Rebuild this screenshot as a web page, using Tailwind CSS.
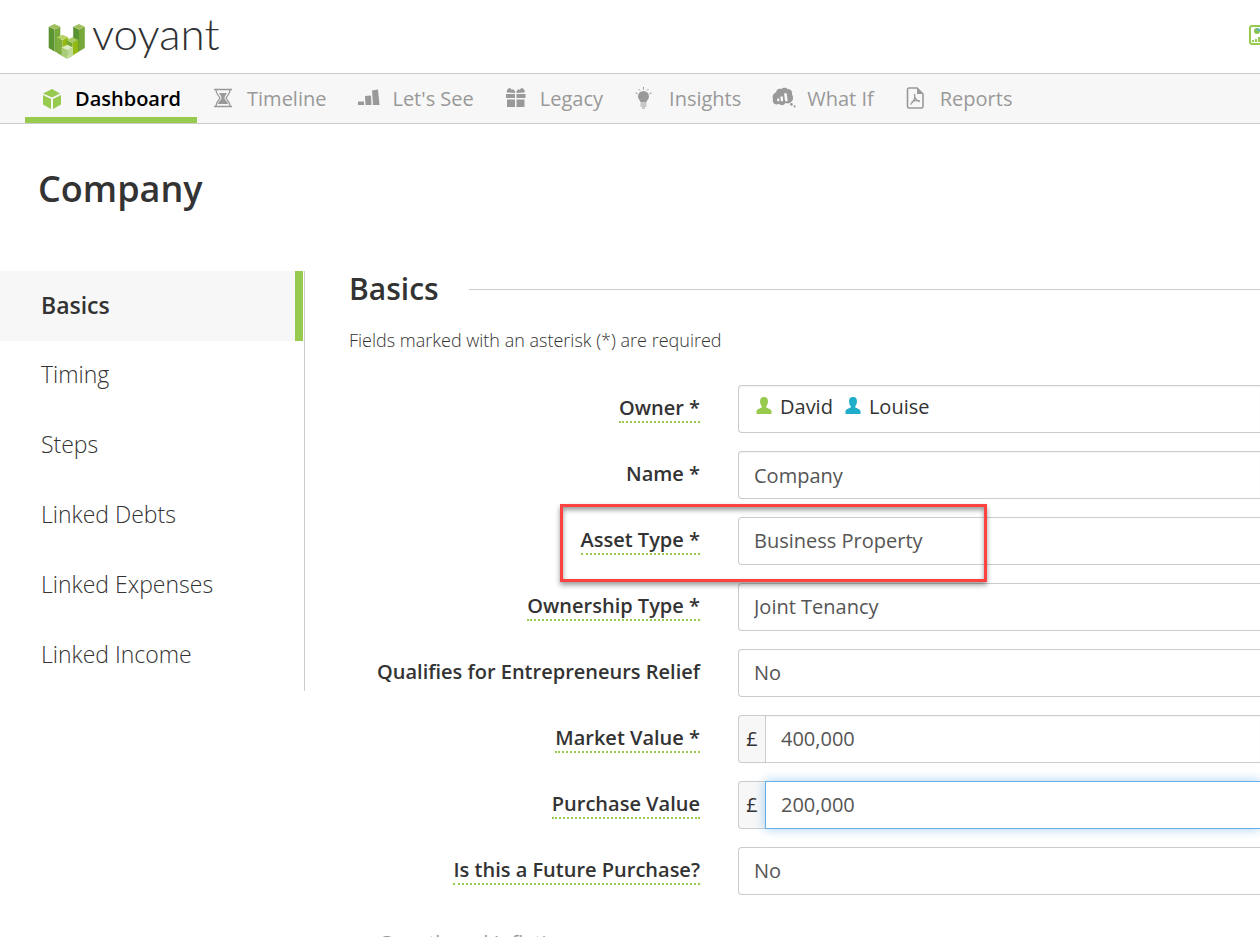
<!doctype html>
<html lang="en">

<head>
    <title>Voyant - Company</title>
    <meta charset="UTF-8">
    <meta name="viewport" content="width=device-width, initial-scale=1.0">
    <script src="https://cdn.jsdelivr.net/npm/@tailwindcss/browser@4"></script>
</head>

<body class="h-screen overflow-hidden bg-white font-['Open_Sans',sans-serif] text-xl text-[#333]">
    <header class="flex h-[74px] items-center justify-between overflow-hidden border-b border-[#ccc] pl-12">
        <a href="#" class="flex items-start gap-1.5 pb-2" aria-label="voyant">
            <svg class="mt-[18px] h-9 w-[38px]" viewBox="0 0 38 36" aria-hidden="true">
                <path fill="#5b9232" d="M.7 3.700l5.800 2.800v22L.7 25z" />
                <path fill="#76a83c" d="M6.500 6.500l5.800-2.800V30l-5.800-1.500z" />
                <path fill="#a0c060" d="M.7 3.700L6.500 1l5.800 2.700-5.800 2.800z" />
                <path fill="#5b9232" d="M25.200 3.700L31 6.500v22L25.200 30z" />
                <path fill="#76a83c" d="M31 6.500l5.800-2.800V25L31 28.500z" />
                <path fill="#a0c060" d="M25.200 3.700L31 1l5.800 2.700L31 6.500z" />
                <path fill="#7fae3f" d="M8.700 14.300l5.800 2.700v16l-5.800-3.300z" />
                <path fill="#93b80f" d="M14.500 17l5.800-2.700V33h-5.800z" />
                <path fill="#b9d268" d="M8.700 14.300l5.800-2.600 5.800 2.600-5.800 2.700z" />
                <path fill="#76a630" d="M18.700 17l5.800 3v12h-5.800z" />
                <path fill="#93b80f" d="M24.500 20l5.800-3v12l-5.800 3.400z" />
                <path fill="#a9ca63" d="M18.700 17l5.800-2.700 5.800 2.700-5.800 3z" />
                <path fill="#a9cc78" d="M13.600 24.500l5.700 2.800V36l-5.700-3.300z" />
                <path fill="#c0da98" d="M19.300 27.300l5.700-2.800v8.200L19.300 36z" />
                <path fill="#dcebc3" d="M13.600 24.500l5.700-2.800 5.700 2.800-5.700 2.800z" />
            </svg>
            <span class="font-['Lato',sans-serif] text-[44px] leading-[56px] font-light text-[#2f3133]">voyant</span>
        </a>
        <button type="button" class="-mr-2 shrink-0 pb-1" aria-label="Client overview">
            <svg class="h-5 w-5" viewBox="0 0 20 20" fill="none" aria-hidden="true">
                <rect x="2" y="1" width="20" height="18" rx="2" stroke="#97ca4f" stroke-width="2" />
                <circle cx="9" cy="6" r="3" fill="#8cc152" />
                <path fill="#5bb8c4" d="M9 6V3a3 3 0 0 1 3 3z" />
                <path fill="#97ca4f" d="M4 15h2v2H4zM7 14h2v3H7zM10 12h2v5h-2z" />
            </svg>
        </button>
    </header>

    <nav class="flex h-[50px] overflow-hidden border-b border-[#ccc] bg-[#f7f7f7] pl-[25px] text-[#999]">
        <a href="#" class="flex items-center gap-3.5 border-b-6 border-[#97ca4f] px-4 pt-[6px] text-black font-semibold">
            <svg class="h-5 w-5" viewBox="0 0 20 20" fill="#97ca4f" aria-hidden="true">
                <path d="M11 0l8 4.500-8 4-9-4zM2 6l8 4v10l-8-4.500zM20 6l-8 4v10l8-4.500z" />
            </svg>
            Dashboard
        </a>
        <a href="#" class="flex items-center gap-3.5 px-4">
            <svg class="mb-0.5 h-5 w-5" viewBox="0 0 20 20" fill="none" stroke="#999" aria-hidden="true">
                <path stroke-width="1.600" d="M1 1.500h18M1 18.500h18" />
                <path stroke-width="1.300" d="M3 2c0 4 3 6 4 8-1 2-4 4-4 8M17 2c0 4-3 6-4 8 1 2 4 4 4 8" />
                <path fill="#999" stroke="none" d="M6 5h8c-1 2-2.500 3-2.500 5s3 3 3.500 6H5c.5-3 3.500-4 3.500-6S7 7 6 5z" />
            </svg>
            Timeline
        </a>
        <a href="#" class="flex items-center gap-3.5 px-4">
            <svg class="-mr-0.5 mb-0.5 h-5 w-[22px]" viewBox="0 0 22 20" fill="#999" aria-hidden="true">
                <path d="M0 13.500h6V17H0zM7 8l6-.5.500 9.500H7.500zM14 2.500l6-1L21.500 17H15z" />
            </svg>
            Let's See
        </a>
        <a href="#" class="flex items-center gap-3.5 px-4">
            <svg class="mb-0.5 h-5 w-5" viewBox="0 0 20 20" fill="#999" aria-hidden="true">
                <path d="M0 6h9v4H0zM10.500 6h9v4h-9zM1 11.500h8V19H1zM10.500 11.500h8V19h-8zM9 5L1 4.500C0 3 2 0 4 0l2 2 1-1 2 2zM10.500 5l8-.5c1-1.500-1-4.500-3-4.500l-2 2-1-1-2 2z" />
            </svg>
            Legacy
        </a>
        <a href="#" class="flex items-center gap-3.5 px-4">
            <svg class="mb-0.5 h-6 w-5" viewBox="0 0 20 24" fill="#999" aria-hidden="true">
                <path d="M8.500 5A5.500 5.500 0 0 1 14 10.500c0 3-2.500 3.500-2.500 6h-6c0-2.500-2.500-3-2.500-6A5.500 5.500 0 0 1 8.500 5z" />
                <path stroke="#999" fill="none" d="M5.500 18h6M5.500 20h6M7 22h3M8.500 1v2.500M.5 7l2 .5M16.500 7l-2 .5M3.500 3L5 4.500M13.500 3L12 4.500" />
            </svg>
            Insights
        </a>
        <a href="#" class="flex items-center gap-3.5 px-4">
            <svg class="mb-0.5 h-5 w-5 overflow-visible" viewBox="1 1 19 19" aria-hidden="true">
                <path fill="#999" d="M4 5c0-3 3-4 5-3 2-2 5-1 6 0 3 0 5 3 4 5 2 3 1 7-2 8-1 1-3 1-4 0-2 3-5 3-6 1-4 2-7-1-6-4-1-3 0-6 3-7z" />
                <path fill="#f7f7f7" d="M5 11h2v2.500H5zM8 9h2.500v4.500H8.500zM11.500 6h2.500l1 7.500h-2.500z" />
                <circle cx="18.500" cy="16.500" r="1.300" fill="#999" />
                <circle cx="21.500" cy="18.500" r="1" fill="#999" />
            </svg>
            What If
        </a>
        <a href="#" class="flex items-center gap-3.5 px-4">
            <svg class="mb-0.5 h-6 w-5" viewBox="0 0 20 24" fill="none" stroke="#999" stroke-width="1.600" aria-hidden="true">
                <path d="M11 2H3Q1.500 2 1.500 3.500v17Q1.500 22 3 22h12.500q1.500 0 1.500-1.500V8z" />
                <path fill="#999" stroke="none" d="M11 1.500v6.500H17.500z" />
                <path stroke-width="1.300" d="M8.500 8c1 4 0 7-4 10.500M5.500 16c3-2 5-2 8.500-1M9 11.500c.500 2 2 3 4.500 4.500" />
            </svg>
            Reports
        </a>
    </nav>

    <h1 class="px-[38px] pt-10 text-4xl leading-[50px] font-semibold">Company</h1>

    <div class="mt-[57px] flex items-start">
        <aside class="w-[305px] shrink-0 border-r border-[#ccc] text-[23px]">
            <a href="#" class="mr-px flex h-[70px] items-center border-r-8 border-[#97ca4f] bg-[#f7f7f7] pb-0.5 pl-[41px] font-semibold">Basics</a>
            <a href="#" class="flex h-[70px] items-center pb-1 pl-[41px] font-light">Timing</a>
            <a href="#" class="flex h-[70px] items-center pb-1 pl-[41px] font-light">Steps</a>
            <a href="#" class="flex h-[70px] items-center pb-1 pl-[41px] font-light">Linked Debts</a>
            <a href="#" class="flex h-[70px] items-center pb-1 pl-[41px] font-light">Linked Expenses</a>
            <a href="#" class="flex h-[70px] items-center pb-1 pl-[41px] font-light">Linked Income</a>
        </aside>

        <main class="min-w-0 flex-1 pl-11">
            <div class="flex items-center gap-[30px]">
                <h2 class="text-3xl leading-9 font-semibold">Basics</h2>
                <hr class="flex-1 border-[#ccc]">
            </div>
            <p class="mt-[21px] text-lg leading-6 font-light">Fields marked with an asterisk (*) are required</p>

            <form class="mt-[33px] flex flex-col gap-[18px]" onsubmit="return false">
                <div class="flex gap-[38px]">
                    <div class="w-[351px] shrink-0 pt-[9px] text-right">
                        <span id="owner-label" class="inline-block border-b-2 border-dotted border-[#97ca4f] leading-[27px] font-semibold">Owner *</span>
                    </div>
                    <div role="group" aria-labelledby="owner-label"
                        class="flex h-12 flex-1 items-start gap-3 rounded-l border border-r-0 border-[#ccc] px-[17px] pt-[7px] leading-7 inset-shadow-xs">
                        <span class="flex items-center gap-2">
                            <svg class="mb-0.5 h-[18px] w-4" viewBox="0 0 16 18" fill="#97ca4f" aria-hidden="true">
                                <path d="M8 0c3 0 4 2 4 4.500S10.500 9 10 10c0 1 5 1.500 5.500 4v3H.5v-3C1 11.500 6 11 6 10 5.500 9 4 7 4 4.500S5 0 8 0z" />
                            </svg>
                            David
                        </span>
                        <span class="flex items-center gap-2">
                            <svg class="mb-0.5 h-[18px] w-4" viewBox="0 0 16 18" fill="#1fadc9" aria-hidden="true">
                                <path d="M8 0c3 0 4 2 4 4.500S10.500 9 10 10c0 1 5 1.500 5.500 4v3H.5v-3C1 11.500 6 11 6 10 5.500 9 4 7 4 4.500S5 0 8 0z" />
                            </svg>
                            Louise
                        </span>
                    </div>
                </div>

                <div class="flex gap-[38px]">
                    <div class="w-[351px] shrink-0 pt-[9px] text-right">
                        <label for="name" class="inline-block leading-[27px] font-semibold">Name *</label>
                    </div>
                    <input id="name" type="text" value="Company"
                        class="h-12 min-w-0 flex-1 rounded-l border border-r-0 border-[#ccc] px-[15px] text-[#555] inset-shadow-xs">
                </div>

                <div class="relative flex gap-[38px]">
                    <div class="w-[351px] shrink-0 pt-[9px] text-right">
                        <label for="asset-type" class="inline-block border-b-2 border-dotted border-[#97ca4f] leading-[27px] font-semibold">Asset Type *</label>
                    </div>
                    <select id="asset-type"
                        class="h-12 min-w-0 flex-1 appearance-none rounded-l border border-r-0 border-[#ccc] px-[15px] text-[#555]">
                        <option>Business Property</option>
                    </select>
                    <!-- callout -->
                    <div class="pointer-events-none absolute -top-[13px] left-[211px] h-[78px] w-[427px] border-3 border-[#ff4343] shadow-[0_3px_5px_rgba(0,0,0,0.4),inset_0_3px_5px_rgba(0,0,0,0.4)]"></div>
                </div>

                <div class="flex gap-[38px]">
                    <div class="w-[351px] shrink-0 pt-[9px] text-right">
                        <label for="ownership" class="inline-block border-b-2 border-dotted border-[#97ca4f] leading-[27px] font-semibold">Ownership Type *</label>
                    </div>
                    <select id="ownership"
                        class="h-12 min-w-0 flex-1 appearance-none rounded-l border border-r-0 border-[#ccc] px-[15px] text-[#555]">
                        <option>Joint Tenancy</option>
                    </select>
                </div>

                <div class="flex gap-[38px]">
                    <div class="w-[351px] shrink-0 pt-[9px] text-right">
                        <label for="relief" class="inline-block leading-[27px] font-semibold">Qualifies for Entrepreneurs Relief</label>
                    </div>
                    <select id="relief"
                        class="h-12 min-w-0 flex-1 appearance-none rounded-l border border-r-0 border-[#ccc] px-[15px] text-[#555]">
                        <option>No</option>
                    </select>
                </div>

                <div class="flex gap-[38px]">
                    <div class="w-[351px] shrink-0 pt-[9px] text-right">
                        <label for="market" class="inline-block border-b-2 border-dotted border-[#97ca4f] leading-[27px] font-semibold">Market Value *</label>
                    </div>
                    <div class="flex h-12 min-w-0 flex-1">
                        <span class="flex w-[27px] items-center justify-center rounded-l border border-r-0 border-[#ccc] bg-[#f7f7f7]">£</span>
                        <input id="market" type="text" value="400,000"
                            class="min-w-0 flex-1 border border-r-0 border-[#ccc] px-[15px] text-[#555] inset-shadow-xs">
                    </div>
                </div>

                <div class="flex gap-[38px]">
                    <div class="w-[351px] shrink-0 pt-[9px] text-right">
                        <label for="purchase" class="inline-block border-b-2 border-dotted border-[#97ca4f] leading-[27px] font-semibold">Purchase Value</label>
                    </div>
                    <div class="flex h-12 min-w-0 flex-1">
                        <span class="flex w-[27px] items-center justify-center rounded-l border border-r-0 border-[#ccc] bg-[#f7f7f7]">£</span>
                        <input id="purchase" type="text" value="200,000"
                            class="min-w-0 flex-1 border border-r-0 border-[#66afe9] px-[15px] text-[#555] shadow-[0_0_10px_rgba(102,175,233,0.6)] outline-none">
                    </div>
                </div>

                <div class="flex gap-[38px]">
                    <div class="w-[351px] shrink-0 pt-[9px] text-right">
                        <label for="future" class="inline-block border-b-2 border-dotted border-[#97ca4f] leading-[27px] font-semibold">Is this a Future Purchase?</label>
                    </div>
                    <select id="future"
                        class="h-12 min-w-0 flex-1 appearance-none rounded-l border border-r-0 border-[#ccc] px-[15px] text-[#555]">
                        <option>No</option>
                    </select>
                </div>

                <h3 class="mt-3.5 pl-[29px] leading-8 text-[#999]">Growth and Inflation</h3>
            </form>
        </main>
    </div>
</body>

</html>
